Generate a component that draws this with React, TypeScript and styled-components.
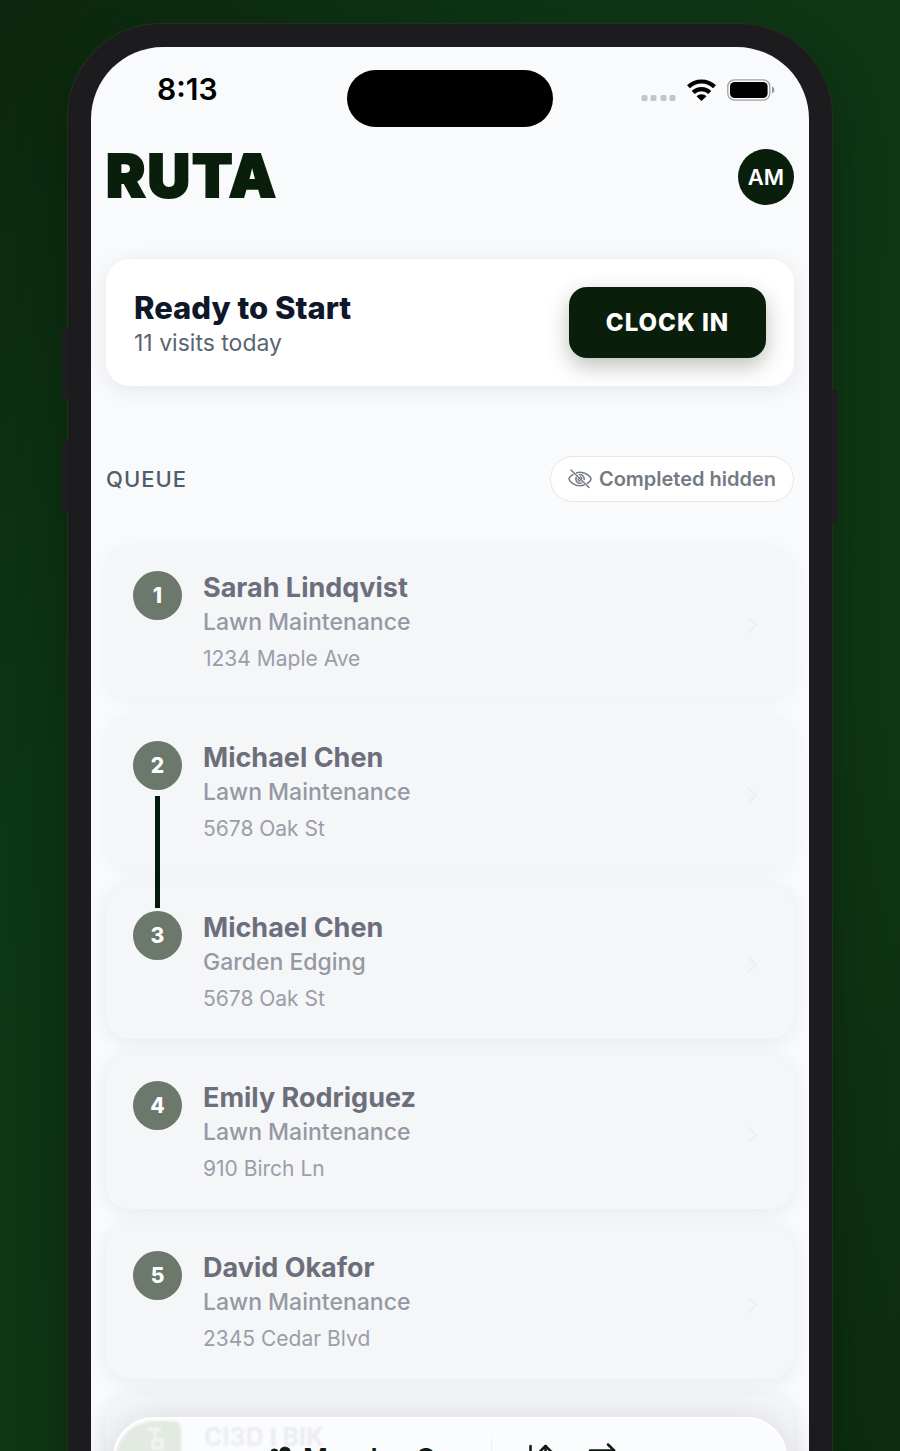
import React from "react";
import styled, { createGlobalStyle } from "styled-components";
import { ArrowDownUp, ArrowRightLeft } from "lucide-react";

const GlobalStyle = createGlobalStyle`
  *, *::before, *::after { box-sizing: border-box; }
  html, body { margin: 0; padding: 0; }
  body { font-family: Inter, "Liberation Sans", sans-serif; color: #0f172a; }
  button { font-family: inherit; border: 0; padding: 0; margin: 0; cursor: pointer; }
  h1, h2, h3, p, ol { margin: 0; padding: 0; }
  a { color: inherit; text-decoration: none; }
`;

const Page = styled.div`
  height: 100vh;
  overflow: hidden;
  padding: 24px 68px;
  background: linear-gradient(125deg, #0c270d 0%, #0d3614 30%, #103713 70%, #0c2d0f 100%);
`;

const Phone = styled.div`
  position: relative;
  padding: 23px;
  background: #1c1c1f;
  border-radius: 92px;
  box-shadow: 0 0 0 1px #23301f, 0 24px 48px rgba(0, 20, 0, 0.4);
`;

const SideButton = styled.span<{ $side: "left" | "right"; $top: number; $length: number }>`
  position: absolute;
  ${(p) => p.$side}: -6px;
  top: ${(p) => p.$top}px;
  width: 7px;
  height: ${(p) => p.$length}px;
  background: #1f1d20;
  border-radius: 3px;
`;

const Screen = styled.div`
  position: relative;
  padding: 23px 0 60px;
  background: #f8fafc;
  border-radius: 72px;
  overflow: hidden;
`;

const StatusBar = styled.div`
  display: grid;
  grid-template-columns: 1fr 206px 1fr;
  color: #000;
`;

const Time = styled.span`
  padding-left: 66px;
  font-size: 30px;
  font-weight: 600;
  line-height: 39px;
`;

const Island = styled.div`
  height: 57px;
  border-radius: 29px;
  background: #000;
`;

const StatusIcons = styled.div`
  display: flex;
  justify-content: flex-end;
  align-items: center;
  gap: 11px;
  height: 39px;
  padding-right: 34px;
`;

const Main = styled.main`
  padding: 22px 15px 0;
`;

const Header = styled.header`
  display: flex;
  justify-content: space-between;
  align-items: flex-start;
`;

const Logo = styled.h1`
  font-size: 59px;
  font-weight: 900;
  line-height: 54px;
  letter-spacing: 2px;
  color: #0a1f0b;
  -webkit-text-stroke: 2px #0a1f0b;
`;

const Avatar = styled.button`
  width: 56px;
  height: 56px;
  border-radius: 50%;
  background: #0a1f0b;
  color: #fff;
  font-size: 22px;
  font-weight: 600;
`;

const ReadyCard = styled.section`
  display: flex;
  justify-content: space-between;
  align-items: center;
  margin-top: 54px;
  padding: 28px;
  background: #fff;
  border-radius: 24px;
  box-shadow: 0 4px 24px rgba(15, 23, 42, 0.08);
`;

const ReadyTitle = styled.h2`
  font-size: 31px;
  font-weight: 800;
  line-height: 42px;
  color: #0f172a;
`;

const ReadyMeta = styled.p`
  font-size: 23px;
  line-height: 29px;
  color: #5b6472;
`;

const ClockButton = styled.button`
  width: 197px;
  height: 71px;
  border-radius: 18px;
  background: #0a1f0b;
  color: #fff;
  font-size: 24px;
  font-weight: 800;
  letter-spacing: 1px;
  box-shadow: 0 8px 22px rgba(10, 31, 11, 0.28);
`;

const QueueHeader = styled.div`
  display: flex;
  justify-content: space-between;
  align-items: center;
  margin-top: 70px;
`;

const QueueTitle = styled.h2`
  font-size: 22px;
  font-weight: 500;
  letter-spacing: 1px;
  color: #525c6b;
`;

const FilterButton = styled.button`
  display: flex;
  align-items: center;
  justify-content: center;
  gap: 7px;
  width: 244px;
  height: 46px;
  border: 1px solid #e3e6ea;
  border-radius: 23px;
  background: #fff;
  color: #747a83;
  font-size: 20px;
  font-weight: 600;
`;

const Queue = styled.ol`
  display: flex;
  flex-direction: column;
  gap: 16px;
  margin-top: 43px;
  list-style: none;
`;

const Stop = styled.li<{ $deep: boolean }>`
  position: relative;
  border-radius: 24px;
  background: #f5f6f8;
  box-shadow: 0 3px 20px rgba(15, 23, 42, ${(p) => (p.$deep ? 0.07 : 0.04)});
`;

const StopLink = styled.a`
  display: grid;
  grid-template-columns: 49px 1fr 14px;
  column-gap: 21px;
  align-items: center;
  height: 154px;
  padding: 26px 34px 21px 27px;
`;

const StopNumber = styled.span`
  display: grid;
  place-items: center;
  align-self: start;
  width: 49px;
  height: 49px;
  border-radius: 50%;
  background: #6b786b;
  color: #fff;
  font-size: 21px;
  font-weight: 800;
`;

const StopName = styled.h3`
  font-size: 27px;
  font-weight: 700;
  line-height: 34px;
  color: #6c6f7b;
`;

const StopService = styled.p`
  font-size: 23px;
  font-weight: 500;
  line-height: 35px;
  color: #9499a3;
`;

const StopAddress = styled.p`
  font-size: 21px;
  line-height: 38px;
  color: #9a9ea8;
`;

const Connector = styled.span`
  position: absolute;
  z-index: 1;
  left: 49px;
  top: 81px;
  width: 5px;
  height: 112px;
  background: #04190a;
`;

const Dock = styled.nav`
  position: absolute;
  z-index: 2;
  left: 22px;
  right: 22px;
  bottom: 110px;
  display: flex;
  align-items: center;
  height: 82px;
  padding-left: 155px;
  overflow: hidden;
  border: 2px solid #fff;
  border-radius: 41px;
  background: #fbfcfe;
  color: #111a13;
`;

const DockShadow = styled.div`
  position: absolute;
  z-index: 1;
  left: 22px;
  right: 22px;
  bottom: 110px;
  height: 82px;
  border-radius: 41px;
  box-shadow: 0 8px 44px rgba(15, 16, 32, 0.17);
`;

const CrewButton = styled.button`
  display: flex;
  align-items: center;
  gap: 11px;
  width: 222px;
  height: 40px;
  border-right: 1px solid #eceef0;
  background: none;
  color: inherit;
  font-size: 27px;
  font-weight: 600;
`;

const DockButton = styled.button`
  display: grid;
  place-items: center;
  width: 36px;
  height: 40px;
  margin-left: 28px;
  background: none;
  color: inherit;
`;

const Refraction = styled.div`
  position: absolute;
  left: 0;
  top: 1px;
  display: flex;
  gap: 23px;
  color: #ebecf0;
  font-size: 25px;
  font-weight: 700;
  line-height: 34px;
  filter: blur(1px);
`;

const stops = [
  { name: "Sarah Lindqvist", service: "Lawn Maintenance", address: "1234 Maple Ave" },
  { name: "Michael Chen", service: "Lawn Maintenance", address: "5678 Oak St", linked: true },
  { name: "Michael Chen", service: "Garden Edging", address: "5678 Oak St" },
  { name: "Emily Rodriguez", service: "Lawn Maintenance", address: "910 Birch Ln" },
  { name: "David Okafor", service: "Lawn Maintenance", address: "2345 Cedar Blvd" },
];

const CellularDots = () => (
  <svg width="35" height="22" viewBox="0 0 35 22" fill="#c4c5c8" aria-hidden="true">
    {[0, 9, 19, 28].map((x) => (
      <rect key={x} x={x + 0.5} y="16" width="6" height="6" rx="1.5" />
    ))}
  </svg>
);

const Wifi = () => (
  <svg width="29" height="22" viewBox="0 0 29 22" aria-hidden="true">
    <g fill="none" stroke="#000" strokeWidth="4.2">
      <path d="M1.500 7.800a18.600 18.600 0 0 1 26 0" />
      <path d="M6.200 13.400a12 12 0 0 1 16.600 0" />
    </g>
    <path d="M14.500 22 9.500 17.300a7 7 0 0 1 10 0z" />
  </svg>
);

const Battery = () => (
  <svg width="48" height="22" viewBox="0 0 48 22" aria-hidden="true">
    <rect x="0.8" y="0.8" width="42" height="20.4" rx="6.5" fill="none" stroke="#9fa0a2" strokeWidth="1.3" />
    <rect x="3" y="3" width="37.6" height="16" rx="4.6" />
    <path d="M45 7.600c3.200 1 3.200 5.800 0 6.800z" fill="#97989a" />
  </svg>
);

const EyeSlash = () => (
  <svg width="24" height="20" viewBox="0 0 24 20" fill="none" stroke="currentColor" strokeWidth="1.5" strokeLinecap="round" aria-hidden="true">
    <path d="M3 1l18 17.500" />
    <path d="M5 5.400C2.700 6.900 1 9 1 10c0 1.800 4.700 6.700 11 6.700 1.500 0 2.900-.3 4.200-.7" />
    <path d="M8.600 3.700C9.700 3.400 10.800 3.300 12 3.300c6.300 0 11 4.900 11 6.700 0 1-1.500 2.900-3.700 4.300" />
    <path d="M8.200 8.400a4.200 4.200 0 0 0 5.400 5.500M11.500 5.800a4.200 4.200 0 0 1 4.700 4.700" />
    <path d="M10.200 10.100a2 2 0 0 0 1.700 1.800M12.600 8.100a2 2 0 0 1 1.300 1.300" />
  </svg>
);

const Chevron = () => (
  <svg width="14" height="18" viewBox="0 0 14 18" fill="none" stroke="#eceef0" strokeWidth="2" aria-hidden="true">
    <path d="M2 1.500 10 9l-8 7.500" />
  </svg>
);

const Crew = () => (
  <svg width="22" height="24" viewBox="0 0 22 24" fill="currentColor" aria-hidden="true">
    <circle cx="15" cy="6" r="5.500" />
    <circle cx="4.500" cy="6.500" r="4" />
    <path d="M6 22c0-6 4-9 9-9s7 3 7 9zM0 20c0-5 2-7.500 6.500-7.500C4.500 15 4 17 4 20z" />
  </svg>
);

const RefractedBadge = () => (
  <svg width="66" height="76" viewBox="0 0 66 76" aria-hidden="true">
    <path d="M0 76V40C2 16 18 2 40 1h16q10 0 10 8v67z" fill="#e3eae2" />
    <path d="M32 9h14M40 9v9M38 20h9v8h-9z" fill="none" stroke="#f1f5f1" strokeWidth="3" />
  </svg>
);

export default function App() {
  return (
    <>
      <GlobalStyle />
      <Page>
        <Phone>
          <SideButton $side="left" $top={303} $length={72} />
          <SideButton $side="left" $top={416} $length={73} />
          <SideButton $side="right" $top={366} $length={134} />
          <Screen>
            <StatusBar>
              <Time>8:13</Time>
              <Island />
              <StatusIcons>
                <CellularDots />
                <Wifi />
                <Battery />
              </StatusIcons>
            </StatusBar>
            <Main>
              <Header>
                <Logo>RUTA</Logo>
                <Avatar type="button">AM</Avatar>
              </Header>
              <ReadyCard>
                <div>
                  <ReadyTitle>Ready to Start</ReadyTitle>
                  <ReadyMeta>11 visits today</ReadyMeta>
                </div>
                <ClockButton type="button">CLOCK IN</ClockButton>
              </ReadyCard>
              <QueueHeader>
                <QueueTitle>QUEUE</QueueTitle>
                <FilterButton type="button">
                  <EyeSlash />
                  Completed hidden
                </FilterButton>
              </QueueHeader>
              <Queue>
                {stops.map((stop, i) => (
                  <Stop key={i} $deep={i > 1}>
                    <StopLink href={`#stop-${i + 1}`}>
                      <StopNumber>{i + 1}</StopNumber>
                      <div>
                        <StopName>{stop.name}</StopName>
                        <StopService>{stop.service}</StopService>
                        <StopAddress>{stop.address}</StopAddress>
                      </div>
                      <Chevron />
                    </StopLink>
                    {stop.linked && <Connector />}
                  </Stop>
                ))}
                <Stop $deep>
                  <StopLink as="div" />
                </Stop>
              </Queue>
            </Main>
            <DockShadow />
            <Dock>
              <Refraction aria-hidden="true">
                <RefractedBadge />
                CI3D I BIK
              </Refraction>
              <CrewButton type="button">
                <Crew />
                Monday Crew
              </CrewButton>
              <DockButton type="button" aria-label="Reorder">
                <ArrowDownUp size={36} strokeWidth={1.7} />
              </DockButton>
              <DockButton type="button" aria-label="Swap">
                <ArrowRightLeft size={36} strokeWidth={1.7} />
              </DockButton>
            </Dock>
          </Screen>
        </Phone>
      </Page>
    </>
  );
}
